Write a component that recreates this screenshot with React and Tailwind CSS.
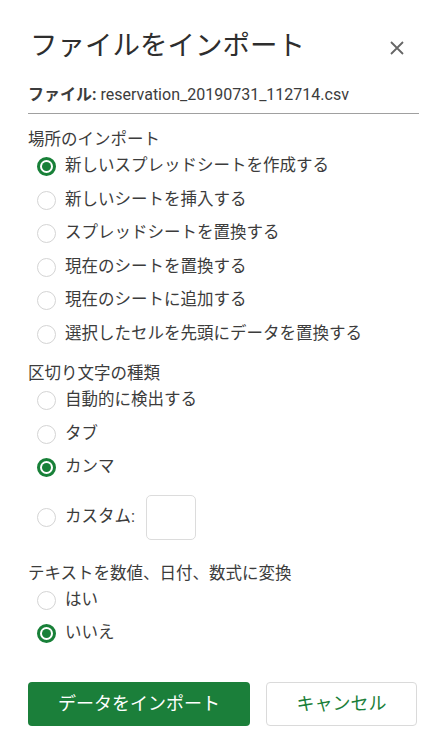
import React, { useState } from 'react'

const Radio = ({ checked, label, onClick, children, tall }) => (
  <label
    onClick={onClick}
    className={`flex items-center gap-[9px] pl-[9px] cursor-pointer ${tall ? 'h-[50px] mt-[8px]' : 'h-[33.5px]'}`}
  >
    {checked ? (
      <span className="flex items-center justify-center w-[19px] h-[19px] rounded-full border-[3px] border-[#188038]">
        <span className="w-[9px] h-[9px] rounded-full bg-[#188038]" />
      </span>
    ) : (
      <span className="w-[19px] h-[19px] rounded-full border-[1.5px] border-[#d4d4d4]" />
    )}
    <span className="text-[16.5px] text-[#3c3c3c]">{label}</span>
    {children}
  </label>
)

const Section = ({ title, options, value, onChange, extra }) => (
  <div>
    <div className="text-[16.5px] text-[#3c3c3c] leading-[24px]">{title}</div>
    <div className="-mt-[2px]">
      {options.map((o, i) => (
        <Radio
          key={o}
          checked={value === i}
          label={o}
          onClick={() => onChange(i)}
          tall={extra && extra.index === i}
        >
          {extra && extra.index === i ? extra.node : null}
        </Radio>
      ))}
    </div>
  </div>
)

export default function App() {
  const [place, setPlace] = useState(0)
  const [sep, setSep] = useState(2)
  const [conv, setConv] = useState(1)

  return (
    <div
      className="w-[447px] h-[754px] bg-white px-[28px] pt-[26px] text-[#333]"
      style={{ fontFamily: 'Roboto, "Noto Sans CJK JP", sans-serif' }}
    >
      <div className="flex items-center justify-between">
        <h1 className="text-[27.5px] leading-[40px] text-[#2e2e2e] pl-[2px]">ファイルをインポート</h1>
        <button className="mr-[14px] mt-[4px] text-[#666]">
          <svg width="16" height="16" viewBox="0 0 16 16" stroke="currentColor" strokeWidth="1.8">
            <path d="M2 2 L14 14 M14 2 L2 14" />
          </svg>
        </button>
      </div>

      <div className="mt-[17px] pb-[6px] border-b border-[#a0a0a0] text-[16px] text-[#3c3c3c] leading-[24px]">
        <span className="font-bold">ファイル:</span> reservation_20190731_112714.csv
      </div>

      <div className="mt-[14px]">
        <Section
          title="場所のインポート"
          value={place}
          onChange={setPlace}
          options={[
            '新しいスプレッドシートを作成する',
            '新しいシートを挿入する',
            'スプレッドシートを置換する',
            '現在のシートを置換する',
            '現在のシートに追加する',
            '選択したセルを先頭にデータを置換する',
          ]}
        />
      </div>

      <div className="mt-[11px]">
        <Section
          title="区切り文字の種類"
          value={sep}
          onChange={setSep}
          options={['自動的に検出する', 'タブ', 'カンマ', 'カスタム:']}
          extra={{
            index: 3,
            node: <input className="ml-[2px] w-[50px] h-[45px] rounded-[5px] border border-[#dcdcdc] outline-none" />,
          }}
        />
      </div>

      <div className="mt-[19px]">
        <Section title="テキストを数値、日付、数式に変換" value={conv} onChange={setConv} options={['はい', 'いいえ']} />
      </div>

      <div className="mt-[31px] flex gap-[16px]">
        <button className="w-[222px] h-[44px] rounded-[4px] bg-[#1b7f3a] text-white text-[18px]">
          データをインポート
        </button>
        <button className="w-[151px] h-[44px] rounded-[4px] border border-[#dadada] bg-white text-[#1b7f3a] text-[18px]">
          キャンセル
        </button>
      </div>
    </div>
  )
}
